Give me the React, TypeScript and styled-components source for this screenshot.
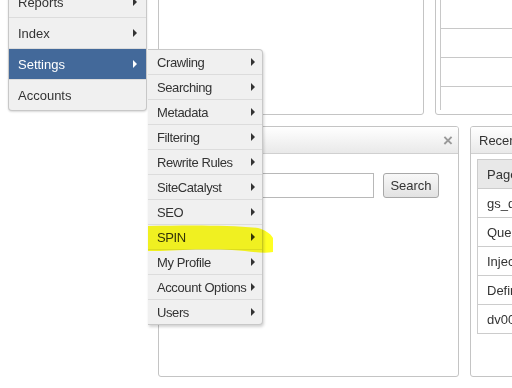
import React from 'react'
import styled, {createGlobalStyle} from 'styled-components'

const GlobalStyle = createGlobalStyle`
  html, body {
    margin: 0;
    padding: 0;
    background: #ffffff;
    overflow: hidden;
  }
  body {
    font-family: "Liberation Sans", Arial, sans-serif;
    font-size: 13px;
    color: #333;
  }
`

const mainItems = [
  {label: 'Reports', active: false, arrow: true},
  {label: 'Index', active: false, arrow: true},
  {label: 'Settings', active: true, arrow: true},
  {label: 'Accounts', active: false, arrow: false},
]

const subItems = [
  'Crawling',
  'Searching',
  'Metadata',
  'Filtering',
  'Rewrite Rules',
  'SiteCatalyst',
  'SEO',
  'SPIN',
  'My Profile',
  'Account Options',
  'Users',
]

const recentRows = ['Page', 'gs_q', 'Quer', 'Injec', 'Defin', 'dv00']
const miniRows = [40, 28, 28, 23]

const App = () => {
  return (
    <Screen>
      <GlobalStyle />
      <Page>
        <Sidebar>
          <MainMenu>
            {mainItems.map((item) => (
              <MainItem key={item.label} $active={item.active}>
                {item.label}
                {item.arrow && <Arrow $light={item.active} />}
              </MainItem>
            ))}
          </MainMenu>
        </Sidebar>

        <Dashboard>
          <Row>
            <Panel $width={266} $height={128} />
            <Panel $width={90} $height={128}>
              <MiniTable>
                {miniRows.map((h, i) => (
                  <MiniRow key={i} $h={h} />
                ))}
              </MiniTable>
            </Panel>
          </Row>
          <Row>
            <Panel $width={301} $height={251}>
              <PanelHead>
                <span />
                <Close>×</Close>
              </PanelHead>
              <SearchRow>
                <SearchInput />
                <SearchButton>Search</SearchButton>
              </SearchRow>
            </Panel>
            <Panel $width={60} $height={251}>
              <PanelHead>
                <HeadTitle>Recent</HeadTitle>
              </PanelHead>
              <RecentTable>
                {recentRows.map((r, i) => (
                  <RecentRow key={r} $head={i === 0}>{r}</RecentRow>
                ))}
              </RecentTable>
            </Panel>
          </Row>
        </Dashboard>
      </Page>

      <SubMenu>
        {subItems.map((s) => (
          <SubItem key={s}>
            <SubLabel>{s}</SubLabel>
            <Arrow />
          </SubItem>
        ))}
      </SubMenu>

      <Marker width="512" height="388" viewBox="0 0 512 388">
        <path
          d="M148,226 C190,225 230,225 258,228 C265,230 270,233 273,238 L273,252 C262,254 250,251 232,250 C205,249 180,250 160,251 C154,251 150,251 148,251 Z"
          fill="#ffff10"
          opacity="0.92"
        />
      </Marker>
    </Screen>
  )
}

export default App

const Screen = styled.div`
  position: relative;
  width: 512px;
  height: 388px;
  overflow: hidden;
`

const Page = styled.div`
  display: flex;
  align-items: flex-start;
  gap: 11px;
  padding-left: 8px;
  margin-top: -13px;
`

const Sidebar = styled.div`
  width: 139px;
  flex-shrink: 0;
`

const MainMenu = styled.ul`
  list-style: none;
  margin: 0;
  padding: 0;
  background: #f0f0f0;
  border: 1px solid #c8c8c8;
  border-top: none;
  border-radius: 0 0 4px 4px;
  box-shadow: 0 1px 2px rgba(0, 0, 0, 0.15);
  overflow: hidden;
`

const MainItem = styled.li<{$active: boolean}>`
  display: flex;
  align-items: center;
  justify-content: space-between;
  height: 30px;
  padding: 0 9px 0 9px;
  border-bottom: 1px solid #dcdcdc;
  background: ${(p) => (p.$active ? '#43699a' : 'transparent')};
  color: ${(p) => (p.$active ? '#ffffff' : '#333333')};
  &:last-child {
    border-bottom: none;
  }
`

const Arrow = styled.span<{$light?: boolean}>`
  flex-shrink: 0;
  width: 0;
  height: 0;
  border-top: 4px solid transparent;
  border-bottom: 4px solid transparent;
  border-left: 4px solid ${(p) => (p.$light ? '#ffffff' : '#333333')};
`

const Dashboard = styled.div`
  display: flex;
  flex-direction: column;
  gap: 11px;
`

const Row = styled.div`
  display: flex;
  gap: 11px;
`

const Panel = styled.div<{$width: number; $height: number}>`
  width: ${(p) => p.$width}px;
  height: ${(p) => p.$height}px;
  flex-shrink: 0;
  border: 1px solid #c4c4c4;
  border-radius: 3px;
  background: #ffffff;
  box-sizing: border-box;
  overflow: hidden;
`

const MiniTable = styled.div`
  margin: 0 0 0 4px;
  border-left: 1px solid #c8c8c8;
  display: flex;
  flex-direction: column;
`

const MiniRow = styled.div<{$h: number}>`
  height: ${(p) => p.$h}px;
  border-bottom: 1px solid #c8c8c8;
  &:last-child {
    border-bottom: none;
  }
`

const PanelHead = styled.div`
  display: flex;
  align-items: center;
  justify-content: space-between;
  height: 26px;
  padding: 0 5px 0 8px;
  background: linear-gradient(#ffffff, #e9e9e9);
  border-bottom: 1px solid #d0d0d0;
`

const HeadTitle = styled.span`
  color: #333;
  white-space: nowrap;
`

const Close = styled.span`
  color: #999;
  font-size: 17px;
  font-weight: bold;
  line-height: 1;
`

const SearchRow = styled.div`
  display: flex;
  align-items: center;
  gap: 9px;
  padding: 19px 0 0 10px;
`

const SearchInput = styled.div`
  width: 205px;
  height: 25px;
  border: 1px solid #b8b8b8;
  box-sizing: border-box;
`

const SearchButton = styled.div`
  width: 56px;
  height: 25px;
  box-sizing: border-box;
  border: 1px solid #a8a8a8;
  border-radius: 3px;
  background: linear-gradient(#f8f8f8, #e2e2e2);
  display: flex;
  align-items: center;
  justify-content: center;
  color: #333;
`

const RecentTable = styled.div`
  margin: 5px 0 0 6px;
  border: 1px solid #cccccc;
  border-right: none;
`

const RecentRow = styled.div<{$head: boolean}>`
  height: 28px;
  display: flex;
  align-items: center;
  padding-left: 9px;
  white-space: nowrap;
  background: ${(p) => (p.$head ? '#e8e8e8' : '#ffffff')};
  border-bottom: 1px solid #cccccc;
  &:last-child {
    border-bottom: none;
  }
`

const SubMenu = styled.ul`
  position: absolute;
  left: 148px;
  top: 49px;
  width: 114px;
  margin: 0;
  padding: 0;
  list-style: none;
  background: #f0f0f0;
  border: 1px solid #c8c8c8;
  border-left: none;
  border-radius: 0 4px 4px 0;
  box-shadow: 1px 2px 3px rgba(0, 0, 0, 0.18);
`

const SubItem = styled.li`
  display: flex;
  align-items: center;
  justify-content: space-between;
  gap: 3px;
  height: 24px;
  padding: 0 7px 0 9px;
  border-bottom: 1px solid #dcdcdc;
  white-space: nowrap;
  &:last-child {
    border-bottom: none;
  }
`

const SubLabel = styled.span`
  letter-spacing: -0.4px;
`

const Marker = styled.svg`
  position: absolute;
  left: 0;
  top: 0;
  pointer-events: none;
  mix-blend-mode: multiply;
`
